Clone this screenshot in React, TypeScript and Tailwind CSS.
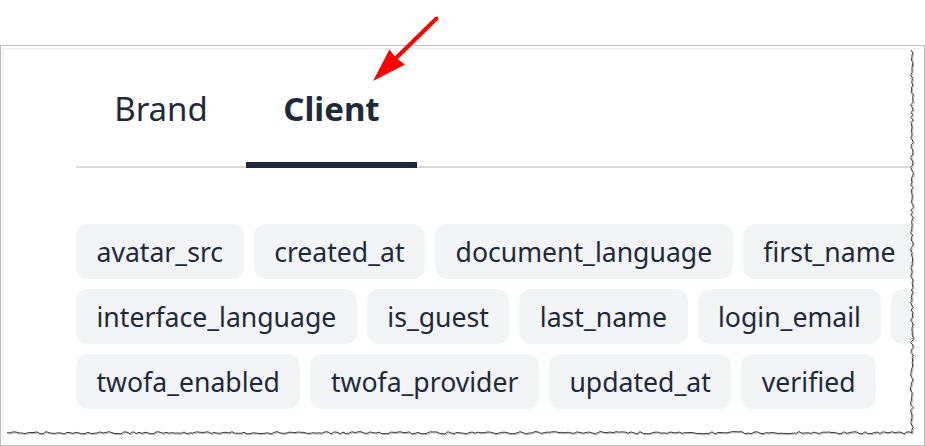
import React from "react";

const tags = [
  "avatar_src",
  "created_at",
  "document_language",
  "first_name",
  "interface_language",
  "is_guest",
  "last_name",
  "login_email",
  "phone",
  "twofa_enabled",
  "twofa_provider",
  "updated_at",
  "verified",
];

function rnd(i: number) {
  const s = Math.sin(i * 12.9898 + 78.233) * 43758.5453;
  return s - Math.floor(s);
}

function TornEdge() {
  const right: [number, number][] = [];
  let i = 0;
  for (let y = 50; y <= 432; y += 2.5) {
    right.push([910.5 + rnd(i++) * 2.8, y]);
  }
  right.push([912, 433]);
  const bottom: [number, number][] = [];
  for (let x = 910; x >= 5; x -= 3) {
    bottom.push([x, 431.5 + rnd(i++) * 2.4]);
  }
  const edge = [...right, ...bottom];
  const pts = edge.map((p) => `${p[0].toFixed(1)},${p[1].toFixed(1)}`).join(" ");
  const fillPts = `${pts} 4,444 923,444 923,49 913,49`;
  const shadowPts = edge.map((p) => `${(p[0] + 1).toFixed(1)},${(p[1] + 1).toFixed(1)}`).join(" ");
  return (
    <svg className="absolute left-0 top-0 pointer-events-none" width={925} height={446}>
      <polygon points={fillPts} fill="#ffffff" />
      <polyline points={shadowPts} fill="none" stroke="#b5b5b5" strokeWidth={1} />
      <polyline points={pts} fill="none" stroke="#3d3d3d" strokeWidth={1} />
    </svg>
  );
}

function Arrow() {
  return (
    <svg className="absolute left-0 top-0 pointer-events-none" width={925} height={100}>
      <line x1={436.5} y1={18.5} x2={393} y2={61} stroke="#ff0000" strokeWidth={4} strokeLinecap="round" />
      <polygon points="373,81 389.5,49.5 396,58 405,64.5" fill="#ff0000" />
    </svg>
  );
}

export default function App() {
  return (
    <div className="relative w-[925px] h-[446px] overflow-hidden bg-white font-['Noto_Sans',sans-serif] text-[#1e293b]">
      <div className="h-[45px]" />
      <div className="h-[401px] w-[925px] border border-[#bfbfbf] p-[2px]">
        <div className="h-full overflow-hidden border-t border-l border-[#efefef]">
          <div className="pl-[72px]">
            <div className="flex w-[1000px] border-b-2 border-[#d9d9d9]">
              <div className="w-[170px] -mb-[2px] pt-[40px] pb-[33px] border-b-[6px] border-transparent text-center text-[33px] leading-[40px]">
                Brand
              </div>
              <div className="w-[171px] -mb-[2px] pt-[40px] pb-[33px] border-b-[6px] border-[#1e293b] text-center text-[33px] leading-[40px] font-bold">
                Client
              </div>
            </div>
            <div className="mt-[56px] flex w-[1080px] flex-wrap gap-[10px]">
              {tags.map((t) => (
                <div
                  key={t}
                  className="flex h-[55px] items-center rounded-[12px] bg-[#f3f4f6] px-[20.5px] pt-[2px] text-[26.6px]"
                >
                  {t}
                </div>
              ))}
            </div>
          </div>
        </div>
      </div>
      <TornEdge />
      <Arrow />
    </div>
  );
}
